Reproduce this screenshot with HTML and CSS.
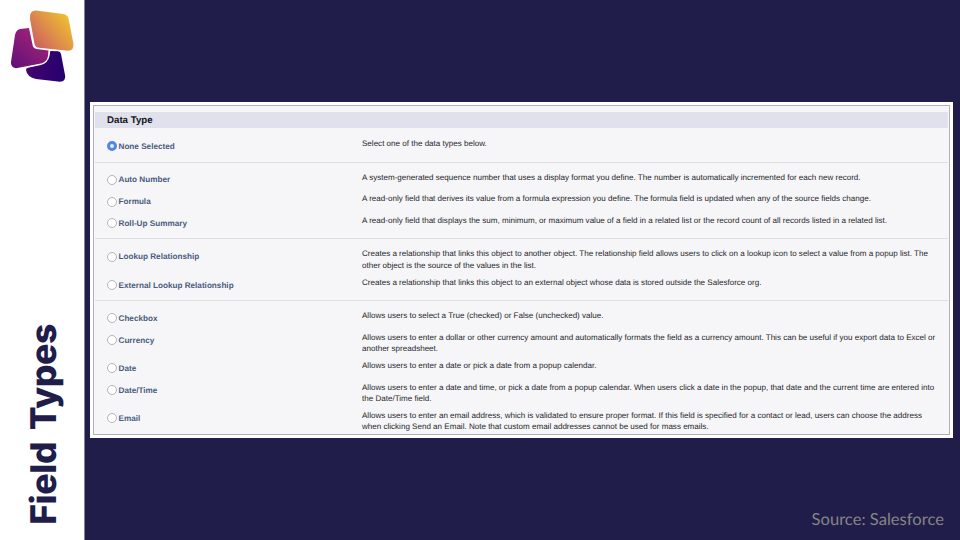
FILE: index.html
```html
<!DOCTYPE html>
<html lang="en">
<head>
<meta charset="utf-8">
<title>Field Types</title>
<link rel="stylesheet" href="styles.css">
</head>
<body>
<aside class="rail">
  <svg class="logo" viewBox="0 0 84 100" width="84" height="100" aria-hidden="true">
    <defs>
      <linearGradient id="gold" x1="0" y1="1" x2="1" y2="0.25"><stop offset="0" stop-color="#c4506a"/><stop offset=".5" stop-color="#dd8a4b"/><stop offset="1" stop-color="#efc32d"/></linearGradient>
      <linearGradient id="plum" x1="0" y1="1" x2=".8" y2="0"><stop offset="0" stop-color="#5f0f78"/><stop offset="1" stop-color="#a92579"/></linearGradient>
      <linearGradient id="violet" x1="0" y1="0" x2="1" y2="0"><stop offset="0" stop-color="#42046f"/><stop offset="1" stop-color="#25006e"/></linearGradient>
    </defs>
    <path fill="url(#violet)" d="M26 70Q26 68 28 67.8L41 65Q48 63 49.5 56L50.3 51L58 51.3Q60.5 51.5 61 54L65.2 76Q65.600 81.500 60 81.800L36 79Q27 77 26 70Z"/>
    <path fill="url(#plum)" d="M29 28L20 29Q16 30 15 35L11 62Q10.500 67.500 16 68.200L41 63.500Q47 62 48 56L48.500 50.500L36.500 49Q33.500 48.500 32.800 46Z"/>
    <path fill="url(#gold)" d="M36 10.500L63 14Q67.500 14.500 68.500 18.500L73.300 43Q74.500 50.500 68 50.800L39 47.800Q35.500 47.500 34.500 44L30 19Q29 10.500 36 10.500Z"/>
  </svg>
  <h1 class="title">Field Types</h1>
</aside>
<main class="stage">
  <section class="frame">
    <div class="panel">
      <h2 class="head">Data Type</h2>
      <div class="group">
        <div class="row"><label class="name"><i class="radio on"></i>None Selected</label><p>Select one of the data types below.</p></div>
      </div>
      <div class="group">
        <div class="row"><label class="name"><i class="radio"></i>Auto Number</label><p>A system-generated sequence number that uses a display format you define. The number is automatically incremented for each new record.</p></div>
        <div class="row"><label class="name"><i class="radio"></i>Formula</label><p>A read-only field that derives its value from a formula expression you define. The formula field is updated when any of the source fields change.</p></div>
        <div class="row"><label class="name"><i class="radio"></i>Roll-Up Summary</label><p>A read-only field that displays the sum, minimum, or maximum value of a field in a related list or the record count of all records listed in a related list.</p></div>
      </div>
      <div class="group">
        <div class="row tall"><label class="name"><i class="radio"></i>Lookup Relationship</label><p>Creates a relationship that links this object to another object. The relationship field allows users to click on a lookup icon to select a value from a popup list. The<br>other object is the source of the values in the list.</p></div>
        <div class="row"><label class="name"><i class="radio"></i>External Lookup Relationship</label><p>Creates a relationship that links this object to an external object whose data is stored outside the Salesforce org.</p></div>
      </div>
      <div class="group">
        <div class="row"><label class="name"><i class="radio"></i>Checkbox</label><p>Allows users to select a True (checked) or False (unchecked) value.</p></div>
        <div class="row tall"><label class="name"><i class="radio"></i>Currency</label><p>Allows users to enter a dollar or other currency amount and automatically formats the field as a currency amount. This can be useful if you export data to Excel or<br>another spreadsheet.</p></div>
        <div class="row"><label class="name"><i class="radio"></i>Date</label><p>Allows users to enter a date or pick a date from a popup calendar.</p></div>
        <div class="row tall"><label class="name"><i class="radio"></i>Date/Time</label><p>Allows users to enter a date and time, or pick a date from a popup calendar. When users click a date in the popup, that date and the current time are entered into<br>the Date/Time field.</p></div>
        <div class="row tall"><label class="name"><i class="radio"></i>Email</label><p>Allows users to enter an email address, which is validated to ensure proper format. If this field is specified for a contact or lead, users can choose the address<br>when clicking Send an Email. Note that custom email addresses cannot be used for mass emails.</p></div>
      </div>
    </div>
  </section>
  <footer class="source">Source: Salesforce</footer>
</main>
</body>
</html>
```
FILE: styles.css
```css
* { box-sizing: border-box; }
body {
  margin: 0;
  width: 960px;
  height: 540px;
  display: flex;
  overflow: hidden;
  background: #211d4a;
  font-family: "Liberation Sans", Arial, sans-serif;
  text-rendering: geometricPrecision;
}
.rail {
  width: 85px;
  height: 540px;
  background: #fff;
  border-right: 1px solid #85839b;
  display: flex;
  flex-direction: column;
  justify-content: space-between;
}
.logo { display: block; }
.title {
  margin: 0 0 15px 21.500px;
  writing-mode: vertical-rl;
  transform: rotate(180deg);
  font: 850 35.500px/44px Inter, sans-serif;
  letter-spacing: -0.350px;
  word-spacing: 4px;
  color: #211d4a;
  white-space: nowrap;
  width: 44px;
}
.stage {
  flex: 1;
  display: flex;
  flex-direction: column;
  justify-content: space-between;
  padding: 102px 0 9px 5px;
}
.frame {
  width: 863px;
  height: 336px;
  padding: 3px;
  background: #fff;
}
.panel {
  height: 330px;
  width: 857px;
  border: 1px solid #b0b1bf;
  background: #f6f6f8;
  padding: 6px 1px 0;
  overflow: hidden;
}
.head {
  margin: 0;
  height: 16px;
  padding-left: 12px;
  background: #e0e1ed;
  color: #15151c;
  font-size: 9.700px;
  line-height: 17px;
}
.group { padding: 6px 0 4.800px 12px; border-bottom: 1px solid #dfdfe1; }
.head + .group { padding-top: 7.100px; }
.group:last-child { border-bottom: 0; }
.row { display: flex; height: 21.670px; }
.tall { height: 28.330px; }
.name {
  display: flex;
  align-items: center;
  height: 11px;
  margin-top: 5.900px;
  width: 255px;
  font-size: 8.170px;
  font-weight: 700;
  color: #4a5c7e;
  white-space: nowrap;
}
.radio {
  width: 10px;
  height: 10px;
  margin-right: 1.500px;
  border: 1px solid #b5b5b9;
  border-radius: 50%;
  background: #fff;
}
.radio.on { border: 3.500px solid #4f87e4; background: #e4edff; }
p {
  margin: 3.100px 0 0;
  font-size: 8.060px;
  line-height: 11.300px;
  color: #25252a;
  white-space: nowrap;
}
.source {
  align-self: flex-end;
  margin-right: 16px;
  font: 16.600px/24px Lato, sans-serif;
  color: #858585;
}
```
